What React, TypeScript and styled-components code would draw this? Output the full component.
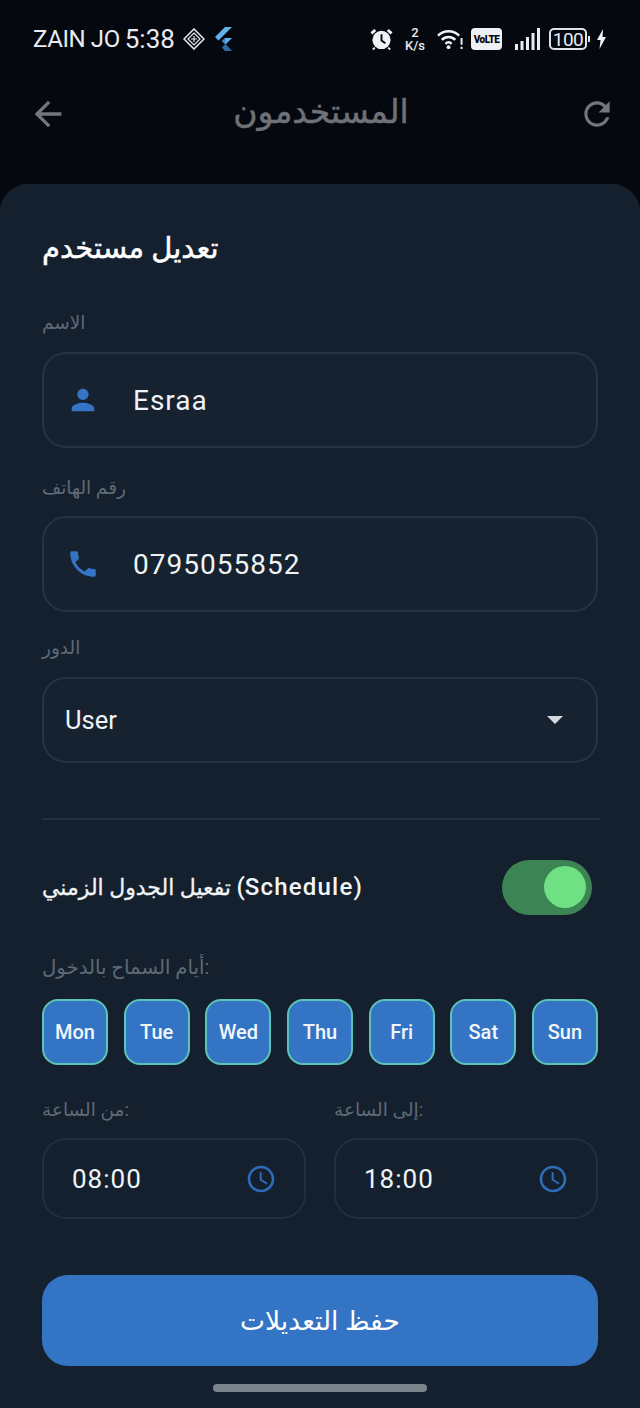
import React from 'react'
import styled, { createGlobalStyle } from 'styled-components'

const GlobalStyle = createGlobalStyle`
  html, body {
    margin: 0;
    padding: 0;
    background: #05080f;
  }
  * {
    box-sizing: border-box;
  }
`

const arabicFont = `"Roboto", "DejaVu Sans", sans-serif`

const Screen = styled.div`
  width: 640px;
  height: 1408px;
  display: flex;
  flex-direction: column;
  overflow: hidden;
  background: #05080f;
  font-family: ${arabicFont};
`

const StatusBar = styled.div`
  height: 78px;
  padding: 0 34px 0 33px;
  display: flex;
  align-items: center;
  justify-content: space-between;
  color: #e8ebf0;
`

const StatusGroup = styled.div`
  display: flex;
  align-items: center;
`

const Carrier = styled.span`
  font-size: 24px;
  letter-spacing: -0.4px;
  margin-right: 5px;
  white-space: nowrap;
`

const Clock = styled.span`
  font-size: 26px;
  margin-right: 8px;
`

const Speed = styled.div`
  width: 24px;
  margin: 0 10px;
  display: flex;
  flex-direction: column;
  align-items: center;
  font-size: 13px;
  font-weight: 500;
  line-height: 13px;
`

const Volte = styled.span`
  width: 31px;
  height: 22px;
  margin: 0 13px 0 8px;
  border-radius: 4px;
  background: #eef0f3;
  color: #05080f;
  font-size: 10px;
  font-weight: 900;
  letter-spacing: -0.6px;
  display: flex;
  align-items: center;
  justify-content: center;
`

const Battery = styled.span`
  width: 38px;
  height: 22px;
  margin: 0 1px 0 9px;
  border: 2px solid #dfe2e7;
  border-radius: 5px;
  font-size: 19px;
  letter-spacing: -0.5px;
  display: flex;
  align-items: center;
  justify-content: center;
`

const BatteryNub = styled.span`
  width: 2px;
  height: 6px;
  margin-right: 7px;
  background: #dfe2e7;
`

const DiamondSlot = styled.span`
  display: flex;
  margin-right: 7px;
`

const NavBar = styled.div`
  height: 106px;
  padding: 0 24px 34px 28px;
  display: flex;
  align-items: center;
  justify-content: space-between;
  color: #73777c;
`

const NavTitle = styled.h1`
  margin: -6px 0 0 -4px;
  font-size: 33px;
  font-weight: 400;
  -webkit-text-stroke: 0.5px #6e7277;
  color: #6e7277;
`

const Sheet = styled.main`
  flex: 1;
  padding: 42px 42px 0;
  display: flex;
  flex-direction: column;
  background: #14202e;
  border-radius: 28px 28px 0 0;
`

const SheetTitle = styled.h2`
  margin: 0;
  height: 44px;
  font-size: 29px;
  line-height: 44px;
  font-weight: 400;
  -webkit-text-stroke: 0.5px #ffffff;
  color: #ffffff;
`

const FieldLabel = styled.label<{ $top: number; $bottom: number; $size?: number }>`
  display: block;
  height: 24px;
  margin: ${(p) => p.$top}px 0 ${(p) => p.$bottom}px;
  font-size: ${(p) => p.$size ?? 18.5}px;
  line-height: 24px;
  color: #5f6a76;
`

const Field = styled.div<{ $height: number }>`
  height: ${(p) => p.$height}px;
  padding: 0 20px;
  display: flex;
  align-items: center;
  border: 2px solid #253343;
  border-radius: 24px;
  background: #16222f;
  color: #f0f3f6;
`

const FieldIcon = styled.span`
  width: 67px;
  margin-left: 2px;
  flex: none;
  display: flex;
  align-items: center;
  color: #3474c4;
`

const ClockSlot = styled.span`
  display: flex;
  color: #2f6cb8;
`

const FieldValue = styled.span`
  font-size: 28px;
  letter-spacing: 1px;
`

const SelectValue = styled.span`
  flex: 1;
  margin-left: 1px;
  font-size: 25.5px;
`

const Caret = styled.span`
  width: 0;
  height: 0;
  margin-right: 13px;
  border-left: 8.5px solid transparent;
  border-right: 8.5px solid transparent;
  border-top: 8.5px solid #d5d9de;
`

const Divider = styled.hr`
  width: 558px;
  height: 2px;
  margin: 55px 0 0;
  border: 0;
  background: #222f3e;
`

const ScheduleRow = styled.div`
  height: 56px;
  margin-top: 39px;
  padding-right: 6px;
  display: flex;
  align-items: center;
  justify-content: space-between;
`

const ScheduleLabel = styled.span`
  font-size: 22px;
  font-weight: 400;
  -webkit-text-stroke: 0.3px #f2f4f6;
  color: #f2f4f6;
`

const ScheduleLatin = styled.span`
  font-size: 24px;
  font-weight: 500;
  letter-spacing: 1.2px;
  -webkit-text-stroke: 0;
`

const Toggle = styled.div`
  width: 90px;
  height: 55px;
  padding-right: 6px;
  display: flex;
  align-items: center;
  justify-content: flex-end;
  border-radius: 28px;
  background: #3d8454;
`

const ToggleKnob = styled.span`
  width: 42px;
  height: 42px;
  border-radius: 50%;
  background: #6fe084;
`

const DayRow = styled.div`
  display: flex;
  justify-content: space-between;
`

const DayChip = styled.div`
  width: 66px;
  height: 66px;
  display: flex;
  align-items: center;
  justify-content: center;
  border: 2px solid #5cc4b4;
  border-radius: 16px;
  background: #3474c4;
  color: #f2f6fa;
  font-size: 20px;
  font-weight: 500;
`

const TimeGrid = styled.div`
  margin-top: 33px;
  display: grid;
  grid-template-columns: 264px 264px;
  column-gap: 28px;
`

const TimeField = styled.div`
  height: 81px;
  padding: 0 27px 0 28px;
  display: flex;
  align-items: center;
  justify-content: space-between;
  border: 2px solid #212e3c;
  border-radius: 24px;
  color: #f0f3f6;
  font-size: 26px;
  letter-spacing: 1px;
`

const SaveButton = styled.button`
  width: 100%;
  height: 91px;
  margin-top: 56px;
  border: 0;
  border-radius: 26px;
  background: #3474c4;
  color: #ffffff;
  font-family: ${arabicFont};
  font-size: 26.5px;
`

const HomeBar = styled.div`
  width: 214px;
  height: 8px;
  margin: 18px auto 0;
  border-radius: 4px;
  background: #7b838c;
`

const Icon = ({ d, size }: { d: string; size: number }) => (
  <svg width={size} height={size} viewBox="0 0 24 24" fill="currentColor">
    <path d={d} />
  </svg>
)

const icons = {
  back: 'M20 11H7.83l5.59-5.59L12 4l-8 8 8 8 1.41-1.41L7.83 13H20v-2z',
  refresh:
    'M17.65 6.35C16.2 4.9 14.21 4 12 4c-4.42 0-7.99 3.58-7.99 8s3.57 8 7.99 8c3.73 0 6.84-2.55 7.73-6h-2.08c-.82 2.33-3.04 4-5.65 4-3.31 0-6-2.69-6-6s2.69-6 6-6c1.66 0 3.14.69 4.22 1.78L13 11h7V4l-2.35 2.35z',
  person:
    'M12 12c2.21 0 4-1.79 4-4s-1.79-4-4-4-4 1.79-4 4 1.79 4 4 4zm0 2c-2.67 0-8 1.34-8 4v2h16v-2c0-2.66-5.33-4-8-4z',
  phone:
    'M6.62 10.79c1.44 2.83 3.76 5.14 6.59 6.59l2.2-2.2c.27-.27.67-.36 1.02-.24 1.12.37 2.33.57 3.57.57.55 0 1 .45 1 1V20c0 .55-.45 1-1 1-9.39 0-17-7.61-17-17 0-.55.45-1 1-1h3.5c.55 0 1 .45 1 1 0 1.25.2 2.45.57 3.57.11.35.03.74-.25 1.02l-2.2 2.2z',
  clock:
    'M11.99 2C6.47 2 2 6.48 2 12s4.47 10 9.99 10C17.52 22 22 17.52 22 12S17.52 2 11.99 2zM12 20c-4.42 0-8-3.58-8-8s3.58-8 8-8 8 3.58 8 8-3.58 8-8 8zm.5-13H11v6l5.25 3.15.75-1.23-4.5-2.67z',
}

const StatusDiamond = () => (
  <svg width="22" height="22" viewBox="0 0 22 22" fill="none" stroke="#e8ebf0" strokeWidth="1.5">
    <path d="M11 1 21 11 11 21 1 11z" />
    <path d="M11 5 17 11 11 17 5 11z" strokeWidth="1.2" />
    <path d="M8 11h6M11 8v6" strokeWidth="1.2" />
  </svg>
)

const FlutterLogo = () => (
  <svg width="22" height="24" viewBox="0 0 20 24">
    <path d="M12 0h7L5.5 13.5 2 10z" fill="#5fb2ec" />
    <path d="M12 11h7l-6.5 6.5L9 14z" fill="#5fb2ec" />
    <path d="M9 14l3.5-3.5 0 7z" fill="#3f86c6" />
    <path d="M9 20.5l3.5-3.5 6.5 7h-7z" fill="#2f6da8" />
  </svg>
)

const AlarmIcon = () => (
  <svg width="23" height="24" viewBox="0 0 24 24">
    <path d="M4.5 1.5 0.5 5l2 2.2 4-3.5zM19.5 1.5l4 3.5-2 2.2-4-3.5z" fill="#f0f2f5" />
    <circle cx="12" cy="13" r="9.5" fill="#f0f2f5" />
    <path d="M12 7v6.5l4 3" fill="none" stroke="#05080f" strokeWidth="2" />
    <path d="M5 21l-2 2M19 21l2 2" stroke="#f0f2f5" strokeWidth="2" />
  </svg>
)

const WifiIcon = () => (
  <svg width="26" height="22" viewBox="0 0 27 22" fill="none" stroke="#f0f2f5" strokeWidth="2.6">
    <path d="M1 7.5C7 1.5 17 1.5 23 7.5" />
    <path d="M5 12C9 8 15 8 19 12" />
    <path d="M8.8 16c2-2 4.4-2 6.4 0" />
    <circle cx="12" cy="19.5" r="2" fill="#f0f2f5" stroke="none" />
    <path d="M25.5 10v7M25.5 19v2.5" strokeWidth="2" />
  </svg>
)

const SignalIcon = () => (
  <svg width="25" height="22" viewBox="0 0 25 22" fill="#e8ebf0">
    <rect x="0" y="16" width="3" height="6" />
    <rect x="5.5" y="13" width="3" height="9" />
    <rect x="11" y="9" width="3" height="13" />
    <rect x="16.5" y="5" width="3" height="17" />
    <rect x="22" y="0" width="3" height="22" />
  </svg>
)

const BoltIcon = () => (
  <svg width="9" height="20" viewBox="0 0 9 20" fill="#f0f2f5">
    <path d="M6 0 0 11h3.5L2.5 20 9 8H5.5z" />
  </svg>
)

const days = ['Mon', 'Tue', 'Wed', 'Thu', 'Fri', 'Sat', 'Sun']

const times = [
  { label: 'من الساعة:', value: '08:00' },
  { label: 'إلى الساعة:', value: '18:00' },
]

const App = () => {
  return (
    <Screen>
      <GlobalStyle />
      <StatusBar>
        <StatusGroup>
          <Carrier>ZAIN JO</Carrier>
          <Clock>5:38</Clock>
          <DiamondSlot>
            <StatusDiamond />
          </DiamondSlot>
          <FlutterLogo />
        </StatusGroup>
        <StatusGroup>
          <AlarmIcon />
          <Speed>
            <span>2</span>
            <span>K/s</span>
          </Speed>
          <WifiIcon />
          <Volte>VoLTE</Volte>
          <SignalIcon />
          <Battery>100</Battery>
          <BatteryNub />
          <BoltIcon />
        </StatusGroup>
      </StatusBar>

      <NavBar>
        <Icon d={icons.back} size={40} />
        <NavTitle>المستخدمون</NavTitle>
        <Icon d={icons.refresh} size={38} />
      </NavBar>

      <Sheet>
        <SheetTitle>تعديل مستخدم</SheetTitle>

        <FieldLabel $top={41} $bottom={17}>الاسم</FieldLabel>
        <Field $height={96}>
          <FieldIcon>
            <Icon d={icons.person} size={34} />
          </FieldIcon>
          <FieldValue>Esraa</FieldValue>
        </Field>

        <FieldLabel $top={28} $bottom={16}>رقم الهاتف</FieldLabel>
        <Field $height={96}>
          <FieldIcon>
            <Icon d={icons.phone} size={34} />
          </FieldIcon>
          <FieldValue>0795055852</FieldValue>
        </Field>

        <FieldLabel $top={24} $bottom={17}>الدور</FieldLabel>
        <Field $height={86}>
          <SelectValue>User</SelectValue>
          <Caret />
        </Field>

        <Divider />

        <ScheduleRow>
          <ScheduleLabel>
            تفعيل الجدول الزمني <ScheduleLatin>(Schedule)</ScheduleLatin>
          </ScheduleLabel>
          <Toggle>
            <ToggleKnob />
          </Toggle>
        </ScheduleRow>

        <FieldLabel $top={41} $bottom={19} $size={19.7}>أيام السماح بالدخول:</FieldLabel>
        <DayRow>
          {days.map((day) => (
            <DayChip key={day}>{day}</DayChip>
          ))}
        </DayRow>

        <TimeGrid>
          {times.map((time) => (
            <div key={time.value}>
              <FieldLabel $top={0} $bottom={16}>{time.label}</FieldLabel>
              <TimeField>
                <span>{time.value}</span>
                <ClockSlot>
                  <Icon d={icons.clock} size={32} />
                </ClockSlot>
              </TimeField>
            </div>
          ))}
        </TimeGrid>

        <SaveButton>حفظ التعديلات</SaveButton>
        <HomeBar />
      </Sheet>
    </Screen>
  )
}

export default App
